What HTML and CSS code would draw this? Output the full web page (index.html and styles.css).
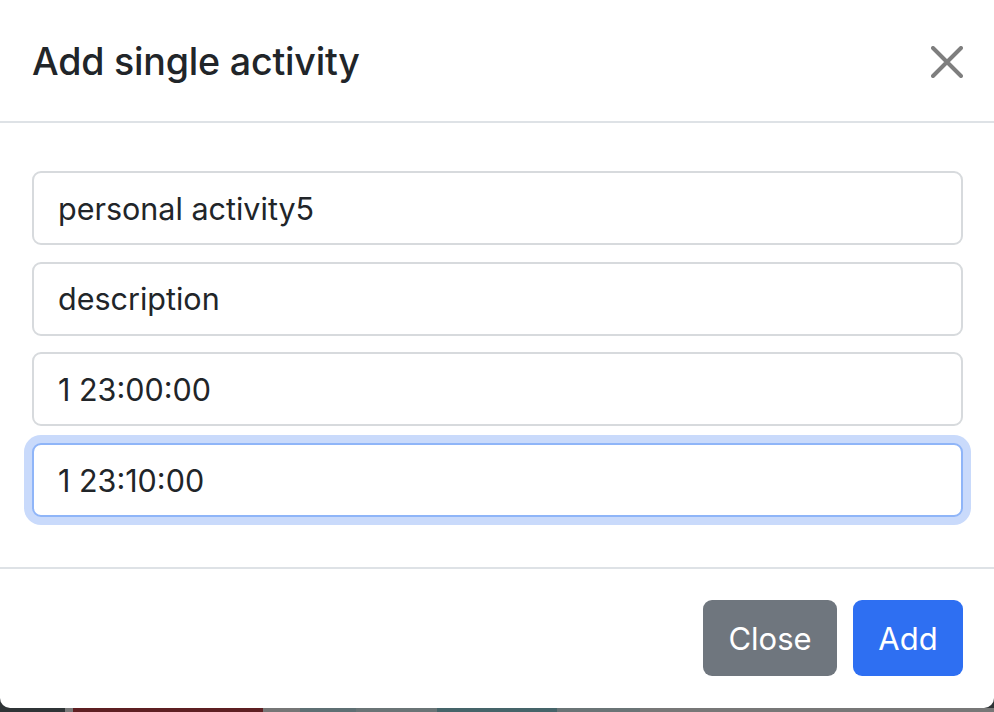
FILE: index.html
```html
<!DOCTYPE html>
<html lang="en">
<head>
<meta charset="utf-8">
<title>Add single activity</title>
<link rel="stylesheet" href="styles.css">
</head>
<body>
<div class="modal">
  <div class="modal-header">
    <h5 class="modal-title">Add single activity</h5>
    <button class="btn-close" type="button" aria-label="Close">
      <svg viewBox="0 0 32 32" width="32" height="32"><path d="M2 2 L30 30 M30 2 L2 30" stroke="#000" stroke-width="4" stroke-linecap="round" fill="none"/></svg>
    </button>
  </div>
  <div class="modal-body">
    <input class="form-control" type="text" value="personal activity5">
    <input class="form-control" type="text" value="description">
    <input class="form-control" type="text" value="1 23:00:00">
    <input class="form-control focused" type="text" value="1 23:10:00">
  </div>
  <div class="modal-footer">
    <button class="btn btn-secondary" type="button">Close</button>
    <button class="btn btn-primary" type="button">Add</button>
  </div>
</div>
<div class="backdrop-strip"></div>
</body>
</html>
```

FILE: styles.css
```css
html, body {
  margin: 0;
  padding: 0;
}
body {
  width: 994px;
  height: 712px;
  overflow: hidden;
  background: #2f3436;
  font-family: Inter, "Liberation Sans", Arial, sans-serif;
  color: #212529;
}
.modal {
  width: 994px;
  height: 708px;
  background: #fff;
  border-radius: 0 0 10px 10px;
  display: flex;
  flex-direction: column;
  box-sizing: border-box;
}
.modal-header {
  height: 123px;
  border-bottom: 2px solid #dee2e6;
  box-sizing: border-box;
  display: flex;
  align-items: center;
  justify-content: space-between;
  padding: 2px 31px 0 32px;
}
.modal-title {
  margin: 0;
  font-size: 37.6px;
  font-weight: 500;
  line-height: 1.2;
  letter-spacing: -0.2px;
}
.btn-close {
  border: 0;
  background: transparent;
  padding: 0;
  width: 32px;
  height: 32px;
  opacity: 0.5;
  display: flex;
}
.modal-body {
  padding: 48px 31px 0 32px;
  display: flex;
  flex-direction: column;
  gap: 16.7px;
  height: 444px;
  box-sizing: border-box;
}
.form-control {
  height: 74px;
  flex: 0 0 74px;
  box-sizing: border-box;
  border: 2px solid #d7dadd;
  border-radius: 9px;
  padding: 0 24px;
  font-family: inherit;
  font-size: 30.5px;
  color: #212529;
  background: #fff;
  outline: none;
}
.form-control.focused {
  border-color: #8fb5f8;
  box-shadow: 0 0 0 8px #c9dafb;
}
.modal-footer {
  border-top: 2px solid #dee2e6;
  flex: 1;
  display: flex;
  justify-content: flex-end;
  align-items: flex-start;
  gap: 16px;
  padding: 31px 31px 0 0;
}
.btn {
  height: 76px;
  border: 0;
  border-radius: 9px;
  padding: 0;
  font-family: inherit;
  font-size: 31px;
  color: #fff;
}
.btn-secondary {
  background: #6f767e;
  width: 134px;
}
.btn-primary {
  background: #2e6ff2;
  width: 110px;
}
.backdrop-strip {
  height: 4px;
  background: linear-gradient(to right,
    #2f3436 0, #2f3436 65px,
    #7a7a7a 65px, #7a7a7a 73px,
    #5e1f22 73px, #5e1f22 263px,
    #767676 263px, #767676 300px,
    #5e6f73 300px, #5e6f73 356px,
    #6a7476 356px, #6a7476 437px,
    #456469 437px, #456469 557px,
    #6a7476 557px, #6a7476 640px,
    #777 640px, #777 994px);
}
```
